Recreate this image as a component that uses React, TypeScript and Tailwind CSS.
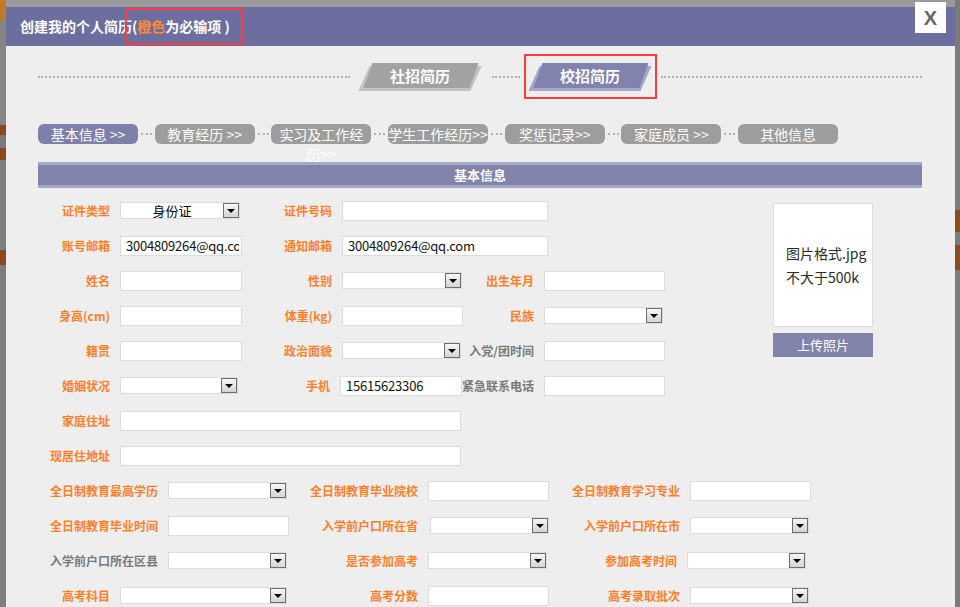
import React from "react";

const font = "font-['Noto_Sans_CJK_SC','Noto_Sans',sans-serif]";

const Label = ({ text, w, gray }: { text: string; w: string; gray?: boolean }) => (
  <div
    className={`${w} shrink-0 whitespace-nowrap text-right text-[12px] font-bold ${
      gray ? "text-[#7a7a7a]" : "text-[#ff7f2a]"
    }`}
  >
    {text}
  </div>
);

const Input = ({ w, value }: { w: string; value?: string }) => (
  <input
    type="text"
    defaultValue={value}
    className={`${w} h-[20px] border border-[#dcdcdc] bg-white pl-[5px] pr-[2px] text-[13px] tracking-[-0.2px] text-[#111] outline-none`}
  />
);

const Select = ({ w, value }: { w: string; value?: string }) => (
  <div className={`${w} flex h-[17px] items-stretch border border-[#dcdcdc] bg-white`}>
    <div className="flex-1 overflow-hidden text-center text-[13px] leading-[16px] text-black">{value}</div>
    <div className="flex w-[16px] items-center justify-center border border-[#6e6e6e] bg-gradient-to-b from-[#f6f6f6] to-[#d4d4d4]">
      <span className="h-0 w-0 border-x-[4px] border-t-[4px] border-x-transparent border-t-black" />
    </div>
  </div>
);

const Slot = ({ w, children }: { w: string; children: React.ReactNode }) => (
  <div className={`${w} ml-[10px] flex shrink-0 items-center`}>{children}</div>
);

const Row = ({ children }: { children: React.ReactNode }) => (
  <div className="flex h-[35px] items-center">{children}</div>
);

const Dots = ({ className }: { className: string }) => (
  <div className={`${className} border-t-2 border-dotted border-[#b2b2b2]`} />
);

const Tab = ({ text, active }: { text: string; active?: boolean }) => (
  <div className="relative flex h-[28px] w-[116px] items-center justify-center">
    <div
      className={`absolute left-[2px] right-[2px] top-[3px] bottom-0 -skew-x-[24deg] ${
        active ? "bg-[#a6a7c9]" : "bg-[#c2c2c2]"
      }`}
    />
    <div
      className={`absolute left-[6px] right-[4px] top-0 bottom-[3px] -skew-x-[20deg] ${
        active ? "bg-[#8182ad]" : "bg-[#a2a2a2]"
      }`}
    />
    <span className="relative text-[15px] font-bold text-white">{text}</span>
  </div>
);

const steps = ["基本信息 >>", "教育经历 >>", "实习及工作经|历>>", "学生工作经历>>", "奖惩记录>>", "家庭成员 >>", "其他信息"];

export default function App() {
  return (
    <div className={`relative flex h-[607px] w-[960px] overflow-hidden bg-[#9a9a9a] ${font}`}>
      <div className="flex w-[6px] flex-col">
        <div className="h-[20px] bg-[#c27a2a]" />
        <div className="h-[105px] bg-[#858585]" />
        <div className="h-[10px] bg-[#8a4a1e]" />
        <div className="h-[13px] bg-[#7a7a7a]" />
        <div className="h-[12px] bg-[#8a4a1e]" />
        <div className="h-[90px] bg-[#7d7d7d]" />
        <div className="h-[15px] bg-[#8a4a1e]" />
        <div className="flex-1 bg-[#7d7d7d]" />
      </div>
      <div className="flex-1" />
      <div className="flex w-[5px] flex-col">
        <div className="h-[210px] bg-[#7b7b7b]" />
        <div className="h-[22px] bg-[#8b4a1e]" />
        <div className="h-[13px] bg-[#7b7b7b]" />
        <div className="h-[25px] bg-[#8b4a1e]" />
        <div className="flex-1 bg-[#7b7b7b]" />
      </div>

      {/* dialog */}
      <div className="absolute bottom-0 left-[6px] top-[7px] w-[949px] bg-[#eeeeee]">
        <div className="flex h-[39px] items-center bg-[#6c6e9f] pl-[14px] text-[14px] font-bold text-white">
          创建我的个人简历
          <span className="ml-[-7px] flex h-[37px] items-center border-2 border-[#ff3b3b] pl-[5px] pr-[12px]">
            (<span className="text-[#ff8a34]">橙色</span>为必输项 )
          </span>
        </div>

        <div className="pl-[32px] pr-[33px]">
          {/* type tabs */}
          <div className="mt-[8px] flex h-[45px] items-center">
            <Dots className="w-[312px]" />
            <div className="ml-[12px]">
              <Tab text="社招简历" />
            </div>
            <Dots className="ml-[14px] w-[28px]" />
            <div className="ml-[4px] flex h-[45px] items-center border-2 border-[#ff3b3b] pl-[6px] pr-[7px]">
              <Tab text="校招简历" active />
            </div>
            <Dots className="ml-[4px] flex-1" />
          </div>

          {/* steps */}
          <div className="mt-[25px] flex h-[20px] items-center">
            {steps.map((s, i) => (
              <React.Fragment key={s}>
                {i > 0 && (
                  <div className="flex w-[16.7px] justify-center">
                    <Dots className="w-[11px]" />
                  </div>
                )}
                <div
                  className={`h-[20px] w-[100px] shrink-0 rounded-[6px] text-center text-[14px] leading-[20px] text-white whitespace-nowrap ${
                    i === 0 ? "bg-[#7f80aa]" : "bg-[#9d9d9d]"
                  }`}
                >
                  {s.includes("|") ? (
                    <>
                      {s.split("|")[0]}
                      <br />
                      {s.split("|")[1]}
                    </>
                  ) : (
                    s
                  )}
                </div>
              </React.Fragment>
            ))}
          </div>

          {/* section header */}
          <div className="mt-[18px] h-[26px] border-y-[3px] border-[#a7a8c8] bg-[#8283ab] text-center text-[13px] font-bold leading-[20px] text-white">
            基本信息
          </div>

          {/* upper block */}
          <div className="flex">
            <div className="w-[627px] pt-[5px]">
              <Row>
                <Label text="证件类型" w="w-[72px]" />
                <Slot w="w-[122px]"><Select w="w-[120px]" value="身份证" /></Slot>
                <Label text="证件号码" w="w-[90px]" />
                <Slot w="w-[206px]"><Input w="w-[206px]" /></Slot>
              </Row>
              <Row>
                <Label text="账号邮箱" w="w-[72px]" />
                <Slot w="w-[122px]"><Input w="w-[122px]" value="3004809264@qq.com" /></Slot>
                <Label text="通知邮箱" w="w-[90px]" />
                <Slot w="w-[206px]"><Input w="w-[206px]" value="3004809264@qq.com" /></Slot>
              </Row>
              <Row>
                <Label text="姓名" w="w-[72px]" />
                <Slot w="w-[122px]"><Input w="w-[122px]" /></Slot>
                <Label text="性别" w="w-[90px]" />
                <Slot w="w-[120px]"><Select w="w-[120px]" /></Slot>
                <Label text="出生年月" w="w-[72px]" />
                <Slot w="w-[121px]"><Input w="w-[121px]" /></Slot>
              </Row>
              <Row>
                <Label text="身高(cm)" w="w-[72px]" />
                <Slot w="w-[122px]"><Input w="w-[122px]" /></Slot>
                <Label text="体重(kg)" w="w-[90px]" />
                <Slot w="w-[120px]"><Input w="w-[121px]" /></Slot>
                <Label text="民族" w="w-[72px]" />
                <Slot w="w-[121px]"><Select w="w-[119px]" /></Slot>
              </Row>
              <Row>
                <Label text="籍贯" w="w-[72px]" />
                <Slot w="w-[122px]"><Input w="w-[122px]" /></Slot>
                <Label text="政治面貌" w="w-[90px]" />
                <Slot w="w-[120px]"><Select w="w-[119px]" /></Slot>
                <Label text="入党/团时间" w="w-[72px]" gray />
                <Slot w="w-[121px]"><Input w="w-[121px]" /></Slot>
              </Row>
              <Row>
                <Label text="婚姻状况" w="w-[72px]" />
                <Slot w="w-[122px]"><Select w="w-[118px]" /></Slot>
                <Label text="手机" w="w-[88px]" />
                <Slot w="w-[122px]"><Input w="w-[122px]" value="15615623306" /></Slot>
                <Label text="紧急联系电话" w="w-[72px]" gray />
                <Slot w="w-[121px]"><Input w="w-[121px]" /></Slot>
              </Row>
              <Row>
                <Label text="家庭住址" w="w-[72px]" />
                <Slot w="w-[341px]"><Input w="w-[341px]" /></Slot>
              </Row>
              <Row>
                <Label text="现居住地址" w="w-[72px]" />
                <Slot w="w-[341px]"><Input w="w-[341px]" /></Slot>
              </Row>
            </div>

            <div className="ml-[108px] mt-[15px] w-[100px]">
              <div className="flex h-[124px] flex-col justify-center border border-[#dcdcdc] bg-white pl-[12px] text-[14px] leading-[24px] text-[#2a2a2a]">
                <div>图片格式.jpg</div>
                <div>不大于500k</div>
              </div>
              <div className="mt-[6px] h-[24px] bg-[#8384ac] text-center text-[13px] leading-[24px] text-white">
                上传照片
              </div>
            </div>
          </div>

          {/* lower block */}
          <div>
            <Row>
              <Label text="全日制教育最高学历" w="w-[120px]" />
              <Slot w="w-[120px]"><Select w="w-[119px]" /></Slot>
              <Label text="全日制教育毕业院校" w="w-[130px]" />
              <Slot w="w-[121px]"><Input w="w-[121px]" /></Slot>
              <Label text="全日制教育学习专业" w="w-[131px]" />
              <Slot w="w-[121px]"><Input w="w-[121px]" /></Slot>
            </Row>
            <Row>
              <Label text="全日制教育毕业时间" w="w-[120px]" />
              <Slot w="w-[120px]"><Input w="w-[121px]" /></Slot>
              <Label text="入学前户口所在省" w="w-[130px]" />
              <Slot w="w-[121px]"><div className="ml-[2px]"><Select w="w-[119px]" /></div></Slot>
              <Label text="入学前户口所在市" w="w-[131px]" />
              <Slot w="w-[121px]"><Select w="w-[119px]" /></Slot>
            </Row>
            <Row>
              <Label text="入学前户口所在区县" w="w-[120px]" gray />
              <Slot w="w-[120px]"><Select w="w-[119px]" /></Slot>
              <Label text="是否参加高考" w="w-[130px]" />
              <Slot w="w-[121px]"><Select w="w-[119px]" /></Slot>
              <Label text="参加高考时间" w="w-[128px]" />
              <Slot w="w-[124px]"><Select w="w-[119px]" /></Slot>
            </Row>
            <Row>
              <Label text="高考科目" w="w-[72px]" />
              <Slot w="w-[168px]"><Select w="w-[167px]" /></Slot>
              <Label text="高考分数" w="w-[130px]" />
              <Slot w="w-[121px]"><Input w="w-[121px]" /></Slot>
              <Label text="高考录取批次" w="w-[131px]" />
              <Slot w="w-[121px]"><Select w="w-[119px]" /></Slot>
            </Row>
          </div>
        </div>
      </div>

      {/* close button */}
      <div className="absolute left-[915px] top-[2px] flex h-[31px] w-[31px] items-center justify-center bg-white font-['Liberation_Sans',sans-serif] text-[20px] font-bold text-[#666]">
        X
      </div>
    </div>
  );
}
